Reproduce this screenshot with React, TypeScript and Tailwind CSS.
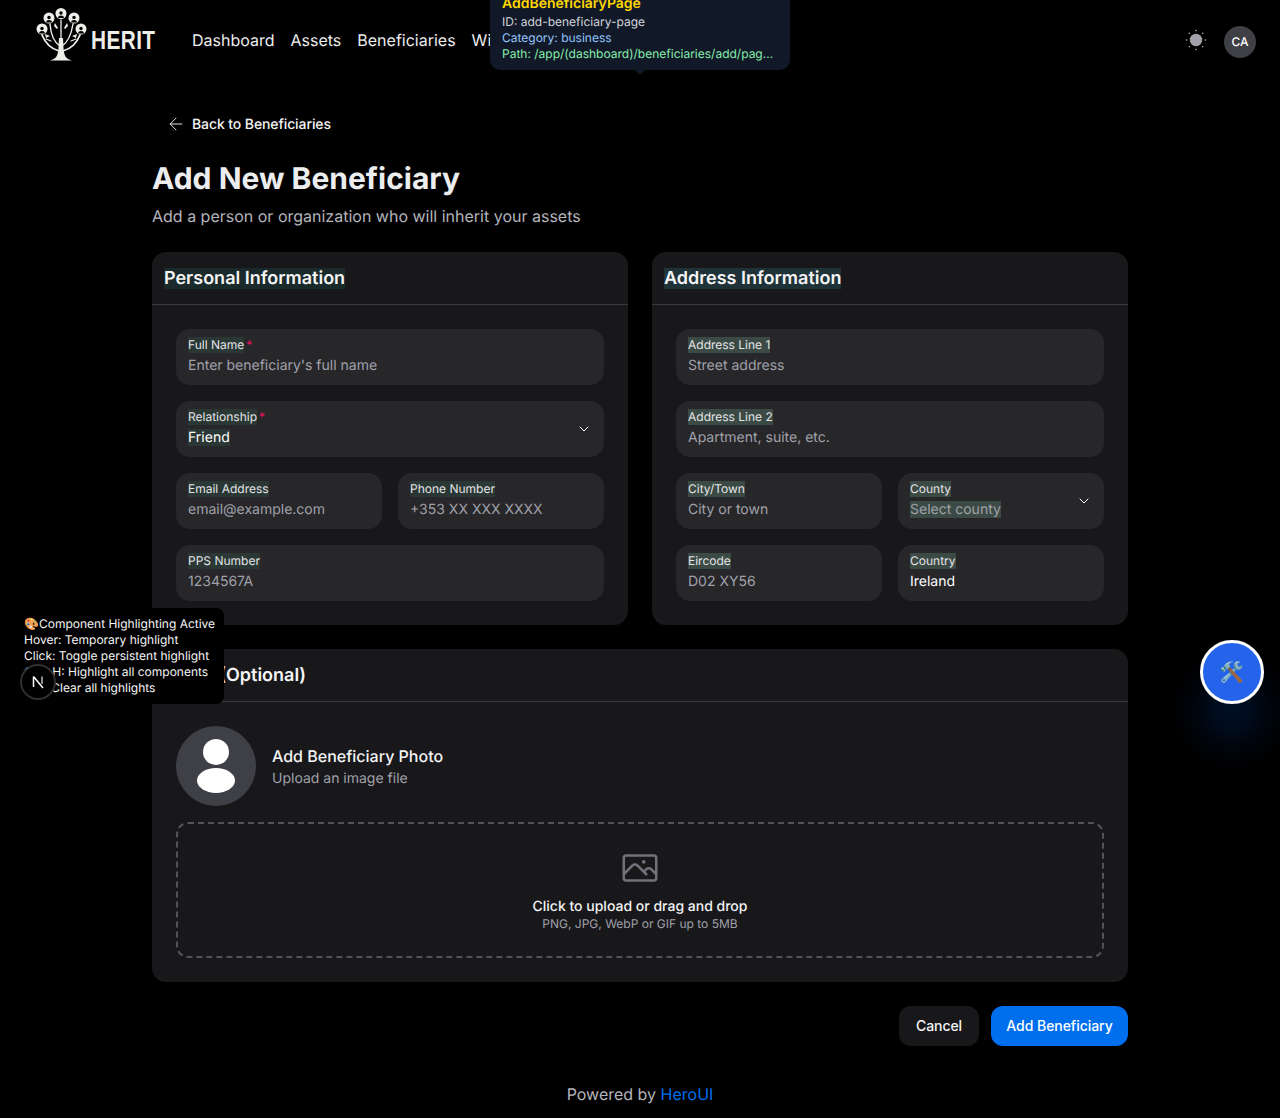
import { ArrowLeft, ChevronDown } from "lucide-react";

const Logo = () => (
  <svg viewBox="36 7 52 55" className="w-[52px] h-[55px] -mt-[11px]" fill="none" stroke="#eeeeea" strokeLinecap="round">
    <path d="M50 60.5 C56 59 58 56 58.5 48 L59 38 L63 38 L63.5 48 C64 56 66 59 72 60.5 Z" fill="#eeeeea" stroke="none" />
    <path d="M61 42 V20" strokeWidth="1.3" />
    <path d="M60 46 C55 43 51 36 50 24" strokeWidth="1.4" />
    <path d="M62 46 C67 43 71 36 73 24" strokeWidth="1.4" />
    <path d="M59 51 C52 49 46 45 42 35" strokeWidth="1.8" />
    <path d="M63 51 C70 49 76 45 80 35" strokeWidth="1.8" />
    <path d="M51 41 L46 39 M71 41 L76 39" strokeWidth="1.2" />
    <path d="M55 23 l3 5 -1 1 -3 -3z M67 23 l-3 5 1 1 3 -3z M50 36 l-5 -2 1 4z M72 36 l5 -2 -1 4z" fill="#eeeeea" stroke="none" />
    {[
      [61, 13.5],
      [49, 18],
      [74, 18],
      [42, 29],
      [81, 29],
    ].map(([cx, cy]) => (
      <g key={`${cx}-${cy}`}>
        <circle cx={cx} cy={cy} r="5.5" fill="#eeeeea" stroke="none" />
        <circle cx={cx} cy={cy - 0.5} r="1.7" fill="#000" stroke="none" />
        <path d={`M${cx - 3} ${cy + 4.5} C${cx - 3} ${cy + 1.2} ${cx + 3} ${cy + 1.2} ${cx + 3} ${cy + 4.5} Z`} fill="#000" stroke="none" />
      </g>
    ))}
  </svg>
);

const SunIcon = () => (
  <svg viewBox="0 0 24 24" className="w-6 h-6">
    <circle cx="12" cy="12" r="6.2" fill="#a1a1aa" />
    {[
      [12, 2.5],
      [12, 21.5],
      [2.5, 12],
      [21.5, 12],
      [5.3, 5.3],
      [18.7, 5.3],
      [5.3, 18.7],
      [18.7, 18.7],
    ].map(([x, y]) => (
      <circle key={`${x}-${y}`} cx={x} cy={y} r="0.8" fill="#b4b4bb" />
    ))}
  </svg>
);

const Field = ({
  label,
  value,
  required,
  filled,
  select,
  tint,
  valueTint,
}: {
  label: string;
  value: string;
  required?: boolean;
  filled?: boolean;
  select?: boolean;
  tint?: string;
  valueTint?: string;
}) => (
  <div className="h-14 rounded-[14px] bg-[#27272a] px-3 flex items-center justify-between">
    <div className="flex flex-col gap-0.5">
      <div className="flex -translate-y-px text-xs leading-4 text-[#e4e4e7]">
        <span className={tint}>{label}</span>
        {required && <span className="text-[#f31260] ml-0.5">*</span>}
      </div>
      <div className={`text-sm leading-5 ${filled ? "text-white" : "text-[#a1a1aa]"}`}>
        <span className={valueTint}>{value}</span>
      </div>
    </div>
    {select && <ChevronDown size={16} strokeWidth={1.5} className="text-white" />}
  </div>
);

const Card = ({
  title,
  tint,
  children,
}: {
  title: string;
  tint?: string;
  children: React.ReactNode;
}) => (
  <section className="rounded-[14px] bg-[#18181b] overflow-hidden">
    <div className="h-[52px] px-3 pt-[15px]">
      <h2 className="text-lg leading-6 font-semibold text-[#f4f4f5]">
        <span className={tint}>{title}</span>
      </h2>
    </div>
    <div className="h-px bg-[#3a3a3e]" />
    <div className="p-6">{children}</div>
  </section>
);

const navItems = ["Dashboard", "Assets", "Beneficiaries", "Wills"];

const App = () => {
  const labelDim = "bg-[#2a3734]";
  const labelBright = "bg-[#3b4a44]";

  return (
    <div className="relative min-h-screen overflow-hidden bg-black text-white font-['Inter',sans-serif] [text-rendering:geometricPrecision]">
      <header className="h-20 pl-9 pr-6 flex items-center justify-between">
        <div className="flex items-center">
          <Logo />
          <span className="ml-[3px] w-[64px] whitespace-nowrap origin-left scale-x-[0.8] text-[26px] font-bold text-[#eeeeea] font-['Liberation_Sans',sans-serif] tracking-[0.02em]">
            HERIT
          </span>
          <nav className="ml-[37px] flex gap-4 text-base text-[#ecedee]">
            {navItems.map((item) => (
              <span key={item}>{item}</span>
            ))}
          </nav>
        </div>
        <div className="flex items-center gap-4">
          <SunIcon />
          <div className="w-8 h-8 mt-1 rounded-full bg-[#3f3f46] flex items-center justify-center text-xs font-medium">CA</div>
        </div>
      </header>

      <main className="max-w-5xl mx-auto px-6 pt-6 pb-6">
        <div className="h-10 pl-[14px] pr-4 inline-flex items-center gap-1.5 text-sm font-medium tracking-[-0.1px] text-[#f4f4f5]">
          <ArrowLeft size={20} strokeWidth={1.1} />
          <span className="translate-y-px">Back to Beneficiaries</span>
        </div>
        <h1 className="mt-[17px] text-3xl leading-9 font-bold text-[#ecedee]">Add New Beneficiary</h1>
        <p className="mt-[7px] text-base text-[#b4b4bb]">Add a person or organization who will inherit your assets</p>

        <div className="mt-6 grid grid-cols-2 gap-6">
          <Card title="Personal Information" tint="bg-[#1a2a2a]">
            <div className="flex flex-col gap-4">
              <Field label="Full Name" value="Enter beneficiary's full name" required tint={labelDim} />
              <Field label="Relationship" value="Friend" required filled select tint={labelDim} valueTint={labelDim} />
              <div className="grid grid-cols-2 gap-4">
                <Field label="Email Address" value="email@example.com" tint={labelDim} />
                <Field label="Phone Number" value="+353 XX XXX XXXX" tint={labelDim} />
              </div>
              <Field label="PPS Number" value="1234567A" tint={labelDim} />
            </div>
          </Card>
          <Card title="Address Information" tint="bg-[#1f3238]">
            <div className="flex flex-col gap-4">
              <Field label="Address Line 1" value="Street address" tint={labelBright} />
              <Field label="Address Line 2" value="Apartment, suite, etc." tint={labelBright} />
              <div className="grid grid-cols-2 gap-4">
                <Field label="City/Town" value="City or town" tint={labelBright} />
                <Field label="County" value="Select county" select tint={labelBright} valueTint={labelBright} />
              </div>
              <div className="grid grid-cols-2 gap-4">
                <Field label="Eircode" value="D02 XY56" tint={labelBright} />
                <Field label="Country" value="Ireland" filled tint={labelBright} />
              </div>
            </div>
          </Card>
        </div>

        <div className="mt-6">
          <Card title="Photo (Optional)">
            <div className="flex items-center gap-4">
              <div className="w-20 h-20 rounded-full bg-[#3f3f46] flex items-center justify-center">
                <svg viewBox="0 0 80 80" className="w-20 h-20" fill="#fff">
                  <circle cx="40" cy="26" r="13" />
                  <ellipse cx="40" cy="54.5" rx="19" ry="12.5" />
                </svg>
              </div>
              <div>
                <div className="text-base leading-6 font-medium text-[#f4f4f5]">Add Beneficiary Photo</div>
                <div className="translate-y-px text-sm leading-5 text-[#a1a1aa]">Upload an image file</div>
              </div>
            </div>
            <div className="mt-4 h-[136px] rounded-xl border-2 border-dashed border-[#52525b] flex flex-col items-center justify-center">
              <svg viewBox="0 0 24 24" className="w-10 h-10" fill="none" stroke="#71717a" strokeWidth="1.5" strokeLinecap="round" strokeLinejoin="round">
                <path d="M2.25 15.75l5.159-5.159a2.25 2.25 0 013.182 0l5.159 5.159m-1.5-1.5l1.409-1.409a2.25 2.25 0 013.182 0l2.909 2.909m-18 3.75h16.5a1.5 1.5 0 001.5-1.5V6a1.5 1.5 0 00-1.5-1.5H3.75A1.5 1.5 0 002.25 6v12a1.5 1.5 0 001.5 1.5zm10.5-11.25h.008v.008h-.008V8.25zm.375 0a.375.375 0 11-.75 0 .375.375 0 01.75 0z" />
              </svg>
              <div className="mt-2 translate-y-px text-sm leading-5 font-medium text-[#f4f4f5]">Click to upload or drag and drop</div>
              <div className="text-xs leading-4 text-[#a1a1aa]">PNG, JPG, WebP or GIF up to 5MB</div>
            </div>
          </Card>
        </div>

        <div className="mt-6 flex justify-end gap-3">
          <button className="h-10 w-20 rounded-xl bg-[#18181b] text-sm font-medium tracking-[-0.1px] text-[#f4f4f5]">Cancel</button>
          <button className="h-10 w-[137px] rounded-xl bg-[#006fee] text-sm font-medium tracking-[-0.05px] text-white">Add Beneficiary</button>
        </div>
      </main>

      <footer className="h-12 flex items-center justify-center text-base text-[#b4b4bb]">
        Powered by&nbsp;<span className="text-[#006fee]">HeroUI</span>
      </footer>

      {/* dev tooltip on top of the nav */}
      <div className="absolute left-[490px] top-[-10px] w-[300px] rounded-b-[10px] bg-[#111827] px-3 pt-1 pb-2 text-xs leading-4">
        <div className="text-sm leading-5 font-semibold text-[#ffd700] -mb-1">AddBeneficiaryPage</div>
        <div className="mt-1 text-[#d1d5db]">ID: add-beneficiary-page</div>
        <div className="text-[#93c5fd]">Category: business</div>
        <div className="text-[#86efac] truncate">Path: /app/(dashboard)/beneficiaries/add/page.tsx</div>
        <div className="absolute left-1/2 -bottom-[5px] -ml-[5px] w-0 h-0 border-x-[5px] border-x-transparent border-t-[5px] border-t-[#111827]" />
      </div>

      {/* highlighter hint */}
      <div className="absolute left-4 top-[608px] w-[208px] h-[96px] rounded-lg bg-black p-2 text-xs leading-4 text-[#f4f4f5]">
        <div>🎨Component Highlighting Active</div>
        <div>Hover: Temporary highlight</div>
        <div>Click: Toggle persistent highlight</div>
        <div>Ctrl+H: Highlight all components</div>
        <div>Esc: Clear all highlights</div>
      </div>

      {/* next dev badge */}
      <div className="absolute left-5 top-[664px] w-9 h-9 rounded-full bg-black border-2 border-[#2f2f2f] flex items-center justify-center">
        <svg viewBox="0 0 16 16" className="w-4 h-4">
          <path d="M3.5 2.5V13M3.5 2.5L13 14" stroke="#fff" strokeWidth="1.5" fill="none" />
          <path d="M12 2.5V10" stroke="#bbb" strokeWidth="1.5" fill="none" />
        </svg>
      </div>

      {/* tools button */}
      <div className="absolute left-[1200px] top-[640px] w-16 h-16 rounded-full border-[3px] border-white bg-[#2563eb] flex items-center justify-center text-xl shadow-[0_38px_36px_rgba(0,90,220,0.2)]">
        🛠️
      </div>
    </div>
  );
};

export default App;
